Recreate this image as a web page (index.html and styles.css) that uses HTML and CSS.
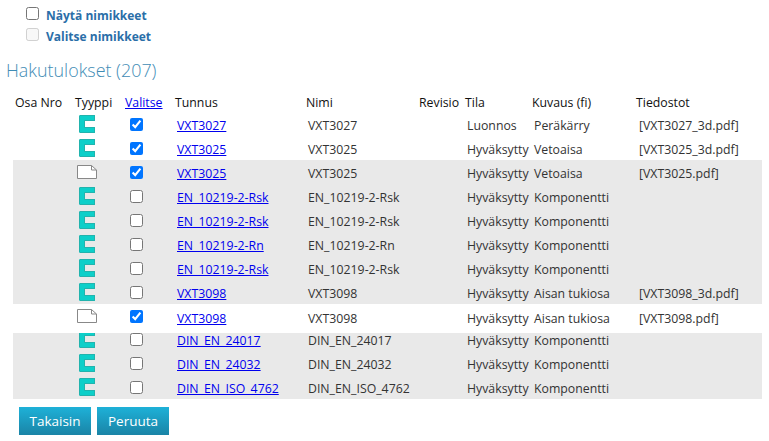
FILE: index.html
```html
<!DOCTYPE html>
<html lang="fi">
<head>
  <meta charset="UTF-8" />
  <title>Hakutulokset</title>
  <link rel="stylesheet" href="styles.css">
</head>
<body>
  <svg class="defs" width="0" height="0">
    <symbol id="comp" viewBox="0 0 16 18">
      <path d="M1 0H16V6H6V12H16V18H1L0 17V1Z" fill="#0dcfc9"/>
      <path d="M1 .5H15.500V5.500H5.500V12.500H15.500V17.500H1L.5 17V1Z" fill="none" stroke="#22b3ad" stroke-width="1"/>
    </symbol>
    <symbol id="doc" viewBox="0 0 20 14">
      <path d="M.5.500H14.500L19.500 5V13.500H.5Z" fill="#fff" stroke="#888"/>
      <path d="M14.500.5V5H19.500" fill="none" stroke="#888"/>
    </symbol>
  </svg>

  <div class="options">
    <label class="option"><input type="checkbox"> Näytä nimikkeet</label>
    <label class="option"><input type="checkbox" disabled> Valitse nimikkeet</label>
  </div>

  <h2 class="title">Hakutulokset (207)</h2>

  <div class="results">
    <div class="row head">
      <span>Osa Nro</span><span>Tyyppi</span><span><a href="#">Valitse</a></span><span>Tunnus</span><span>Nimi</span><span>Revisio</span><span>Tila</span><span>Kuvaus (fi)</span><span>Tiedostot</span>
    </div>

    <div class="row">
      <span></span><span class="icon"><svg class="i-comp"><use href="#comp"/></svg></span><span class="check"><input type="checkbox" checked></span><span class="c"><a href="#">VXT3027</a></span><span class="c">VXT3027</span><span></span><span class="c">Luonnos</span><span class="c">Peräkärry</span><span class="c">[VXT3027_3d.pdf]</span>
    </div>
    <div class="row">
      <span></span><span class="icon"><svg class="i-comp"><use href="#comp"/></svg></span><span class="check"><input type="checkbox" checked></span><span class="c"><a href="#">VXT3025</a></span><span class="c">VXT3025</span><span></span><span class="c">Hyväksytty</span><span class="c">Vetoaisa</span><span class="c">[VXT3025_3d.pdf]</span>
    </div>
    <div class="row grey">
      <span></span><span class="icon"><svg class="i-doc"><use href="#doc"/></svg></span><span class="check"><input type="checkbox" checked></span><span class="c"><a href="#">VXT3025</a></span><span class="c">VXT3025</span><span></span><span class="c">Hyväksytty</span><span class="c">Vetoaisa</span><span class="c">[VXT3025.pdf]</span>
    </div>
    <div class="row grey">
      <span></span><span class="icon"><svg class="i-comp"><use href="#comp"/></svg></span><span class="check"><input type="checkbox"></span><span class="c"><a href="#">EN_10219-2-Rsk</a></span><span class="c">EN_10219-2-Rsk</span><span></span><span class="c">Hyväksytty</span><span class="c">Komponentti</span><span></span>
    </div>
    <div class="row grey">
      <span></span><span class="icon"><svg class="i-comp"><use href="#comp"/></svg></span><span class="check"><input type="checkbox"></span><span class="c"><a href="#">EN_10219-2-Rsk</a></span><span class="c">EN_10219-2-Rsk</span><span></span><span class="c">Hyväksytty</span><span class="c">Komponentti</span><span></span>
    </div>
    <div class="row grey">
      <span></span><span class="icon"><svg class="i-comp"><use href="#comp"/></svg></span><span class="check"><input type="checkbox"></span><span class="c"><a href="#">EN_10219-2-Rn</a></span><span class="c">EN_10219-2-Rn</span><span></span><span class="c">Hyväksytty</span><span class="c">Komponentti</span><span></span>
    </div>
    <div class="row grey">
      <span></span><span class="icon"><svg class="i-comp"><use href="#comp"/></svg></span><span class="check"><input type="checkbox"></span><span class="c"><a href="#">EN_10219-2-Rsk</a></span><span class="c">EN_10219-2-Rsk</span><span></span><span class="c">Hyväksytty</span><span class="c">Komponentti</span><span></span>
    </div>
    <div class="row grey">
      <span></span><span class="icon"><svg class="i-comp"><use href="#comp"/></svg></span><span class="check"><input type="checkbox"></span><span class="c"><a href="#">VXT3098</a></span><span class="c">VXT3098</span><span></span><span class="c">Hyväksytty</span><span class="c">Aisan tukiosa</span><span class="c">[VXT3098_3d.pdf]</span>
    </div>
    <div class="row tall">
      <span></span><span class="icon"><svg class="i-doc"><use href="#doc"/></svg></span><span class="check"><input type="checkbox" checked></span><span class="c"><a href="#">VXT3098</a></span><span class="c">VXT3098</span><span></span><span class="c">Hyväksytty</span><span class="c">Aisan tukiosa</span><span class="c">[VXT3098.pdf]</span>
    </div>
    <div class="row grey short">
      <span></span><span class="icon"><svg class="i-comp"><use href="#comp"/></svg></span><span class="check"><input type="checkbox"></span><span class="c"><a href="#">DIN_EN_24017</a></span><span class="c">DIN_EN_24017</span><span></span><span class="c">Hyväksytty</span><span class="c">Komponentti</span><span></span>
    </div>
    <div class="row grey">
      <span></span><span class="icon"><svg class="i-comp"><use href="#comp"/></svg></span><span class="check"><input type="checkbox"></span><span class="c"><a href="#">DIN_EN_24032</a></span><span class="c">DIN_EN_24032</span><span></span><span class="c">Hyväksytty</span><span class="c">Komponentti</span><span></span>
    </div>
    <div class="row grey">
      <span></span><span class="icon"><svg class="i-comp"><use href="#comp"/></svg></span><span class="check"><input type="checkbox"></span><span class="c"><a href="#">DIN_EN_ISO_4762</a></span><span class="c">DIN_EN_ISO_4762</span><span></span><span class="c">Hyväksytty</span><span class="c">Komponentti</span><span></span>
    </div>
  </div>

  <div class="buttons">
    <button>Takaisin</button>
    <button>Peruuta</button>
  </div>
</body>
</html>
```

FILE: styles.css
```css
html, body {
  margin: 0;
  height: 441px;
  overflow: hidden;
}
body {
  font-family: "Open Sans", sans-serif;
  font-size: 12.3px;
  color: #333;
  background: #fff;
}
.defs {
  display: block;
  height: 0;
}
.options {
  padding: 5px 0 0 26px;
}
.option {
  display: flex;
  align-items: center;
  gap: 7px;
  height: 21px;
  font-size: 12px;
  font-weight: 700;
  color: #2a6ea8;
}
.option input {
  margin: 2px 0 0;
  align-self: flex-start;
}
.title {
  margin: 11px 0 0 6px;
  font-size: 17.900px;
  line-height: 24px;
  font-weight: 300;
  color: #3f8cb5;
}
.results {
  margin: 10px 7px 0 13px;
}
.row {
  display: grid;
  grid-template-columns: 60px 50px 50px 131px 113px 46px 67px 104px 1fr;
  align-items: center;
  height: 24px;
}
.head {
  height: 20px;
  color: #111;
}
.head span {
  padding: 1px 0 0 2px;
}
.grey {
  background: #e9e9e9;
}
.tall {
  height: 29px;
  align-items: start;
}
.tall > span {
  height: 24px;
  display: flex;
  align-items: center;
}
/* row starts 6px under the white row above, only the icon gets cut */
.short {
  height: 18px;
  grid-template-rows: 24px;
  align-content: end;
}
.short > span {
  height: 24px;
  display: flex;
  align-items: center;
}
.short > .icon {
  height: 15px;
  margin-top: 6px;
  align-self: start;
  align-items: flex-end;
  overflow: hidden;
}
.c {
  padding-left: 4px;
  padding-top: 2px;
}
.c:last-child {
  padding-left: 5px;
}
.icon {
  display: flex;
  align-items: center;
  padding-left: 4px;
}
.i-comp {
  flex: none;
  width: 16px;
  height: 18px;
  margin-left: 2px;
}
.i-doc {
  width: 20px;
  height: 14px;
}
.check {
  display: flex;
  align-items: center;
  padding-left: 7px;
}
.check input {
  margin: 0;
  width: 13px;
  height: 13px;
}
a {
  color: #0000ee;
}
.buttons {
  display: flex;
  gap: 6px;
  padding: 8px 0 0 19px;
}
button {
  width: 72px;
  height: 28px;
  border: none;
  padding: 0;
  font-family: inherit;
  font-size: 13.500px;
  color: #fff;
  background: linear-gradient(to bottom, #1eb1d8, #1a84a6);
}
```
